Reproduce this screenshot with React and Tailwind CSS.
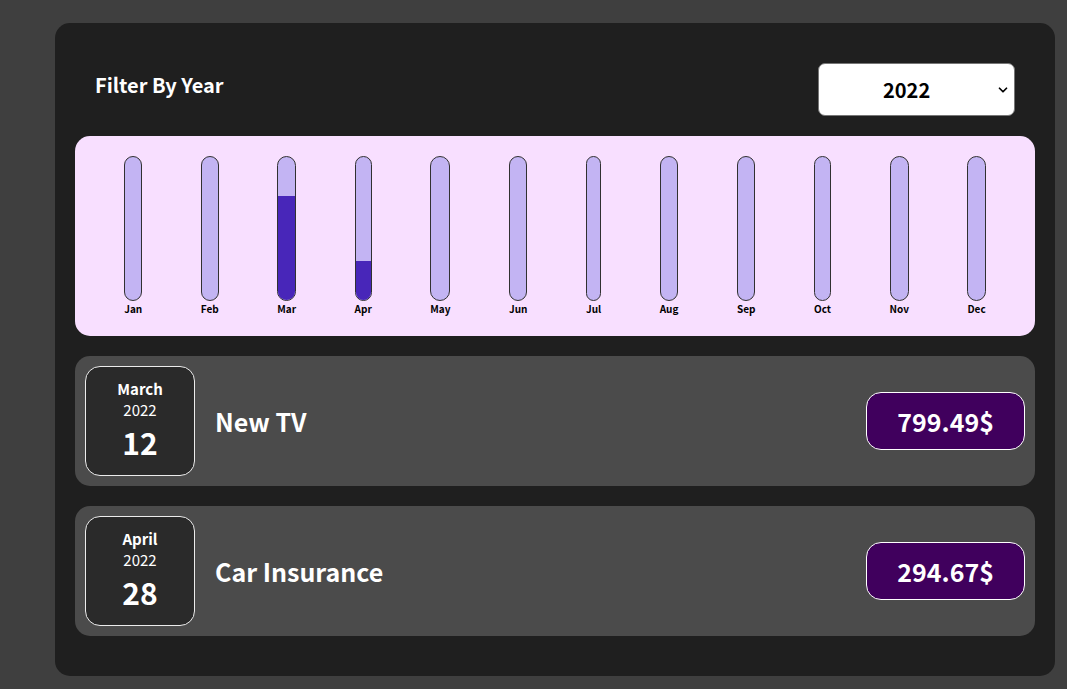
import { ChevronDown } from "lucide-react";

const MONTHS = ["Jan", "Feb", "Mar", "Apr", "May", "Jun", "Jul", "Aug", "Sep", "Oct", "Nov", "Dec"];

const EXPENSES = [
  { id: "e1", title: "New TV", amount: 799.49, month: "March", year: "2022", day: "12", m: 2 },
  { id: "e2", title: "Car Insurance", amount: 294.67, month: "April", year: "2022", day: "28", m: 3 },
];

function ChartBar({ label, value, max }) {
  const fill = max > 0 ? Math.round((value / max) * 100) + "%" : "0%";
  return (
    <div className="h-full flex flex-col items-center">
      <div className="h-full w-full border border-[#313131] rounded-[15px] bg-[#c3b4f3] overflow-hidden flex flex-col justify-end">
        <div className="bg-[#4826b9] w-full" style={{ height: fill }}></div>
      </div>
      <div className="font-bold text-[10px] text-center text-black">{label}</div>
    </div>
  );
}

function Chart() {
  const values = MONTHS.map((_, i) =>
    EXPENSES.filter((e) => e.m === i).reduce((s, e) => s + e.amount, 0)
  );
  const total = values.reduce((s, v) => s + v, 0);
  return (
    <div className="p-5 rounded-[15px] bg-[#f8dfff] flex justify-around h-[200px]">
      {MONTHS.map((m, i) => (
        <ChartBar key={m} label={m} value={values[i]} max={total} />
      ))}
    </div>
  );
}

function ExpenseItem({ item }) {
  return (
    <div className="flex items-center justify-between p-[10px] rounded-[15px] bg-[#4b4b4b] my-5">
      <div className="flex flex-col items-center justify-center w-[110px] h-[110px] border border-[#ececec] bg-[#2a2a2a] text-white rounded-[15px]">
        <div className="text-[15px] font-bold">{item.month}</div>
        <div className="text-[15px]">{item.year}</div>
        <div className="text-[30px] font-bold">{item.day}</div>
      </div>
      <div className="flex flex-1 items-center justify-between">
        <h2 className="text-[25px] font-bold text-white mx-5 flex-1">{item.title}</h2>
        <div className="text-[25px] font-bold text-white bg-[#40005d] border border-white py-[10px] px-[30px] rounded-[15px]">
          {item.amount.toFixed(2)}$
        </div>
      </div>
    </div>
  );
}

export default function App() {
  return (
    <div
      className="min-h-screen bg-[#3f3f3f] pt-[23px] pb-[14px] leading-[normal]"
      style={{ fontFamily: '"Noto Sans CJK JP", "Noto Sans", sans-serif' }}
    >
      <div className="ml-[55px] w-[1000px] p-5 bg-[#1f1f1f] rounded-[15px]">
        <div className="text-white px-5">
          <div className="flex w-full items-center justify-between my-5">
            <label className="font-bold text-[20px] mb-[10px]">Filter By Year</label>
            <div className="relative">
              <select
                defaultValue="2022"
                className="appearance-none w-[197px] h-[53px] bg-white text-black font-bold text-[20px] rounded-[7px] border border-[#767676] pl-[64px] pr-[40px] text-left"
              >
                <option value="2022">2022</option>
                <option value="2021">2021</option>
                <option value="2020">2020</option>
                <option value="2019">2019</option>
              </select>
              <ChevronDown
                size={14}
                strokeWidth={3}
                className="absolute right-[5px] top-[20px] text-black pointer-events-none"
              />
            </div>
          </div>
        </div>
        <Chart />
        {EXPENSES.map((e) => (
          <ExpenseItem key={e.id} item={e} />
        ))}
      </div>
    </div>
  );
}
